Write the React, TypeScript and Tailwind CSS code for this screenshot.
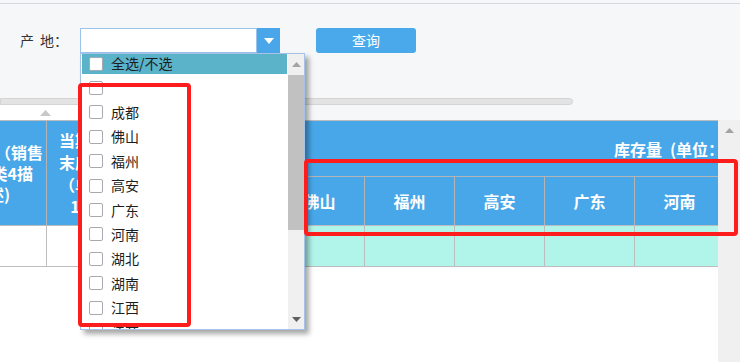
import React from 'react';

const cities = ['佛山', '福州', '高安', '广东', '河南'];
const options = ['', '成都', '佛山', '福州', '高安', '广东', '河南', '湖北', '湖南', '江西', '江苏'];

const Checkbox = () => (
  <span className="inline-block w-[14px] h-[14px] shrink-0 rounded-[2px] border border-[#a7abb0] bg-white" />
);

const Triangle = ({ down, color, w = 9, h = 5 }: { down?: boolean; color: string; w?: number; h?: number }) => (
  <svg width={w} height={h} viewBox={`0 0 ${w} ${h}`}>
    <polygon points={down ? `0,0 ${w},0 ${w / 2},${h}` : `0,${h} ${w},${h} ${w / 2},0`} fill={color} />
  </svg>
);

const ProvinceSelect = () => (
  <div className="relative flex h-[25px] w-[200px]">
    <div className="flex-1 border border-[#9cc3ec] bg-white" />
    <div className="flex w-[23px] items-center justify-center bg-[#49a7e9]">
      <Triangle down color="#ffffff" w={10} h={6} />
    </div>

    <div className="absolute left-0 top-[25px] z-10 flex h-[277px] w-[225px] border border-[#a6c2e6] bg-white shadow-[4px_4px_5px_rgba(0,0,0,0.35)]">
      <div className="flex-1 overflow-hidden">
        <div className="-mt-[2.5px]">
          <div className="h-[24.4px] py-[2.2px]">
            <div className="mx-[1px] flex h-full items-center gap-[8px] bg-[#5ab3c8] pl-[7px] text-[14px] text-[#1d1d1d]">
              <Checkbox />
              <span>全选/不选</span>
            </div>
          </div>
          {options.map((o, i) => (
            <div key={i} className="flex h-[24.4px] items-center gap-[8px] pl-[8px] text-[14px] text-[#1d1d1d]">
              <Checkbox />
              <span>{o}</span>
            </div>
          ))}
        </div>
      </div>
      <div className="flex w-[16px] flex-col bg-[#f0f0f0]">
        <div className="flex h-[21px] items-center justify-center">
          <Triangle color="#a3a3a3" />
        </div>
        <div className="h-[155px] bg-[#c1c1c1]" />
        <div className="flex flex-1 items-end justify-center pb-[7px]">
          <Triangle down color="#5f5f5f" />
        </div>
      </div>
    </div>
  </div>
);

export default function App() {
  return (
    <div className="relative h-[362px] w-[740px] overflow-hidden bg-white font-['Noto_Sans_CJK_SC',sans-serif]">
      {/* 查询条件 */}
      <div className="h-[120px] bg-[#f6f7f9] pt-[3px]">
        <div className="border-t border-[#d6d7dc]">
          <div className="flex items-center pt-[24px]">
            <span className="flex w-[80px] pl-[20px] text-[14px] text-[#333]">
              产<span className="ml-[6px]">地：</span>
            </span>
            <ProvinceSelect />
            <button className="ml-[36px] h-[25px] w-[100px] rounded-[3px] bg-[#49a9eb] text-[14px] text-white">
              查询
            </button>
          </div>
          <div className="mt-[45px] h-[7px] w-[573px] rounded-r-full border border-[#d4d4d4] bg-[#e3e3e3]" />
          <div className="flex h-[15px] w-[110px] items-center justify-center bg-white pr-[20px]">
            <Triangle color="#c8c8c8" w={11} h={6} />
          </div>
        </div>
      </div>

      {/* 表格 */}
      <div className="flex h-[242px]">
        <div className="w-[718px] overflow-hidden border-t border-[#bdbdbd]">
          <div className="flex h-[105px] border-b border-[#bdbdbd] bg-[#48a7e8] text-[16px] font-bold leading-[21px] text-white">
            <div className="flex w-[47px] shrink-0 flex-col justify-center overflow-hidden border-r border-[#b4b4b4] whitespace-nowrap">
              <div className="flex justify-end pr-[3px]">量（销售</div>
              <div className="flex justify-end pr-[13px]">分类4描</div>
              <div className="flex justify-end pr-[36px]">述)</div>
            </div>
            <div className="flex w-[57px] shrink-0 flex-col items-center justify-center overflow-hidden border-r border-[#b4b4b4] leading-[22px] whitespace-nowrap">
              <div>当期</div>
              <div>末库</div>
              <div>（单</div>
              <div>1</div>
            </div>
            <div className="flex flex-1 flex-col">
              <div className="flex h-[55px] items-center justify-end whitespace-nowrap pt-[2px]">
                库存量<span className="pl-[8px]">(单位：</span>
              </div>
              <div className="flex flex-1 border-t border-[#b4b4b4]">
                <div className="w-[170px] shrink-0" />
                {cities.map((c) => (
                  <div key={c} className="flex w-[90px] shrink-0 items-center justify-center border-l border-[#b4b4b4]">
                    {c}
                  </div>
                ))}
              </div>
            </div>
          </div>
          <div className="flex h-[41px] border-b border-[#bdbdbd]">
            <div className="w-[47px] shrink-0 border-r border-[#bdbdbd] bg-white" />
            <div className="w-[57px] shrink-0 border-r border-[#bdbdbd] bg-white" />
            <div className="w-[170px] shrink-0 bg-[#b1f5ea]" />
            {cities.map((c) => (
              <div key={c} className="w-[90px] shrink-0 border-l border-[#bdbdbd] bg-[#b1f5ea]" />
            ))}
          </div>
        </div>
        <div className="flex w-[22px] justify-center bg-[#f0f0f0] pt-[8px]">
          <Triangle color="#a3a3a3" />
        </div>
      </div>

      {/* 标注框 */}
      <div className="absolute left-[78px] top-[83px] z-20 h-[244px] w-[113px] rounded-[4px] border-[4px] border-[#ff1c1c]" />
      <div className="absolute left-[304px] top-[159px] z-20 h-[77px] w-[434px] rounded-[4px] border-[4px] border-[#ff1c1c]" />
    </div>
  );
}
